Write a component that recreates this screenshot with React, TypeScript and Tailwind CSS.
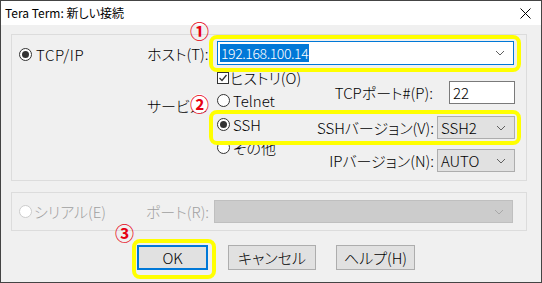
import React from "react";

const font = "font-['Noto_Sans_CJK_JP',sans-serif] font-light [font-feature-settings:'palt']";

/* ---------- small Win10-style controls ---------- */
const Radio: React.FC<{ checked?: boolean; disabled?: boolean }> = ({ checked, disabled }) => (
  <span
    className={`w-[13px] h-[13px] shrink-0 rounded-full border flex items-center justify-center bg-white ${
      disabled ? "border-[#cccccc]" : "border-[#333333]"
    }`}
  >
    {checked && <span className="w-[7px] h-[7px] rounded-full bg-[#333333]" />}
  </span>
);

const Chevron: React.FC<{ color?: string }> = ({ color = "#606060" }) => (
  <svg width="10" height="6" viewBox="0 0 10 6" className="shrink-0">
    <path d="M1 1 L5 5 L9 1" fill="none" stroke={color} strokeWidth="1" />
  </svg>
);

const Select: React.FC<{ value: string }> = ({ value }) => (
  <div className="w-[78px] h-[23px] bg-[#e1e1e1] border border-[#adadad] flex items-center justify-between pl-[3px] pr-[8px]">
    <span className="text-[15px] leading-none">{value}</span>
    <Chevron />
  </div>
);

const Button: React.FC<{ label: string; w: string; primary?: boolean }> = ({ label, w, primary }) => (
  <div
    className={`${w} h-[25px] bg-[#e1e1e1] flex items-center justify-center text-[15px] leading-none ${
      primary ? "border-2 border-[#0078d7]" : "border border-[#adadad]"
    }`}
  >
    {label}
  </div>
);

/* ---------- annotation overlays ---------- */
const Mark: React.FC<{ n: string; className: string }> = ({ n, className }) => (
  <span className={`absolute text-[19px] leading-none font-bold text-[#e60012] ${className}`}>{n}</span>
);

const App: React.FC = () => {
  return (
    <div className={`relative w-[542px] h-[283px] border border-[#444444] flex flex-col text-black ${font}`}>
      {/* Title bar */}
      <div className="h-[24px] bg-white flex items-center justify-between pl-[4px] pr-[10px]">
        <span className="text-[12px] leading-none font-normal">Tera Term: 新しい接続</span>
        <svg width="11" height="11" viewBox="0 0 11 11">
          <path d="M0.5 0.5 L10.5 10.5 M10.5 0.5 L0.5 10.5" stroke="#000" strokeWidth="1" />
        </svg>
      </div>

      {/* Body */}
      <div className="flex-1 bg-[#f0f0f0] px-[10px] pt-[9px]">
        {/* TCP/IP group */}
        <div className="w-[516px] h-[147px] border border-[#dcdcdc] flex">
          <div className="w-[135px] pl-[7px] pt-[13px] flex items-start">
            <div className="flex items-center gap-[4px] h-[13px]">
              <Radio checked />
              <span className="text-[15px] leading-none tracking-[0.6px]">TCP/IP</span>
            </div>
          </div>

          <div className="flex-1 pt-[6px] pr-[11px] flex flex-col">
            {/* host */}
            <div className="flex items-center h-[24px]">
              <span className="w-[70px] text-[15px] leading-none">ホスト(T):</span>
              <div className="w-[297px] h-[24px] bg-white border border-[#0078d7] flex items-center justify-between pl-[2px] pr-[8px]">
                <span className="bg-[#0078d7] text-white text-[14px] tracking-[-0.4px] leading-[18px] px-[1px]">192.168.100.14</span>
                <Chevron />
              </div>
            </div>

            <div className="flex">
              {/* service label */}
              <div className="w-[70px] pt-[28px]">
                <span className="text-[15px] leading-none">サービス:</span>
              </div>

              {/* radios */}
              <div className="w-[88px] flex flex-col">
                <div className="h-[23px] flex items-center gap-[1px] pt-[2px]">
                  <svg width="12" height="12" viewBox="0 0 12 12" className="shrink-0">
                    <rect x="0.5" y="0.5" width="11" height="11" fill="#fff" stroke="#333" />
                    <path d="M2.5 6 L5 8.5 L9.5 3" fill="none" stroke="#333" strokeWidth="1.3" />
                  </svg>
                  <span className="text-[15px] leading-none">ヒストリ(O)</span>
                </div>
                <div className="h-[24px] flex items-center gap-[3px]">
                  <Radio />
                  <span className="text-[15px] leading-none">Telnet</span>
                </div>
                <div className="h-[25px] flex items-center gap-[3px]">
                  <Radio checked />
                  <span className="text-[15px] leading-none">SSH</span>
                </div>
                <div className="h-[20px] flex items-center gap-[3px]">
                  <Radio />
                  <span className="text-[15px] leading-none">その他</span>
                </div>
              </div>

              {/* right column */}
              <div className="flex-1 flex flex-col items-end">
                <div className="mt-[16px] h-[23px] flex items-center">
                  <span className="text-[15px] leading-none mr-[16px]">TCPポート#(P):</span>
                  <div className="w-[66px] h-[23px] bg-white border border-[#7a7a7a] flex items-center pl-[3px] text-[15px] leading-none">
                    22
                  </div>
                </div>
                <div className="mt-[12px] h-[23px] flex items-center">
                  <span className="text-[15px] leading-none mr-[3px]">SSHバージョン(V):</span>
                  <Select value="SSH2" />
                </div>
                <div className="mt-[10px] h-[23px] flex items-center">
                  <span className="text-[15px] leading-none mr-[3px]">IPバージョン(N):</span>
                  <Select value="AUTO" />
                </div>
              </div>
            </div>
          </div>
        </div>

        {/* Serial group (disabled) */}
        <div className="mt-[11px] w-[516px] h-[39px] border border-[#dcdcdc] flex items-center text-[#a0a0a0]">
          <div className="w-[134px] pl-[7px] flex items-center gap-[2px]">
            <Radio disabled />
            <span className="text-[15px] leading-none">シリアル(E)</span>
          </div>
          <span className="w-[68px] text-[15px] leading-none">ポート(R):</span>
          <div className="w-[299px] h-[23px] bg-[#cccccc] border border-[#bfbfbf] flex items-center justify-end pr-[8px]">
            <Chevron color="#a8a8a8" />
          </div>
        </div>

        {/* Buttons */}
        <div className="mt-[14px] pl-[126px] flex gap-[20px]">
          <Button label="OK" w="w-[71px]" primary />
          <Button label="キャンセル" w="w-[88px]" />
          <Button label="ヘルプ(H)" w="w-[79px]" />
        </div>
      </div>

      {/* Yellow highlight annotations */}
      <div className="absolute left-[208px] top-[34px] w-[312px] h-[37px] border-[4px] border-[#ffff00] rounded-[8px]" />
      <div className="absolute left-[208px] top-[109px] w-[312px] h-[35px] border-[4px] border-[#ffff00] rounded-[8px]" />
      <div className="absolute left-[131px] top-[238px] w-[84px] h-[40px] border-[4px] border-[#ffff00] rounded-[8px]" />

      <Mark n="①" className="left-[189px] top-[20px]" />
      <Mark n="②" className="left-[189px] top-[93px] bg-white rounded-full" />
      <Mark n="③" className="left-[114px] top-[222px]" />
    </div>
  );
};

export default App;
